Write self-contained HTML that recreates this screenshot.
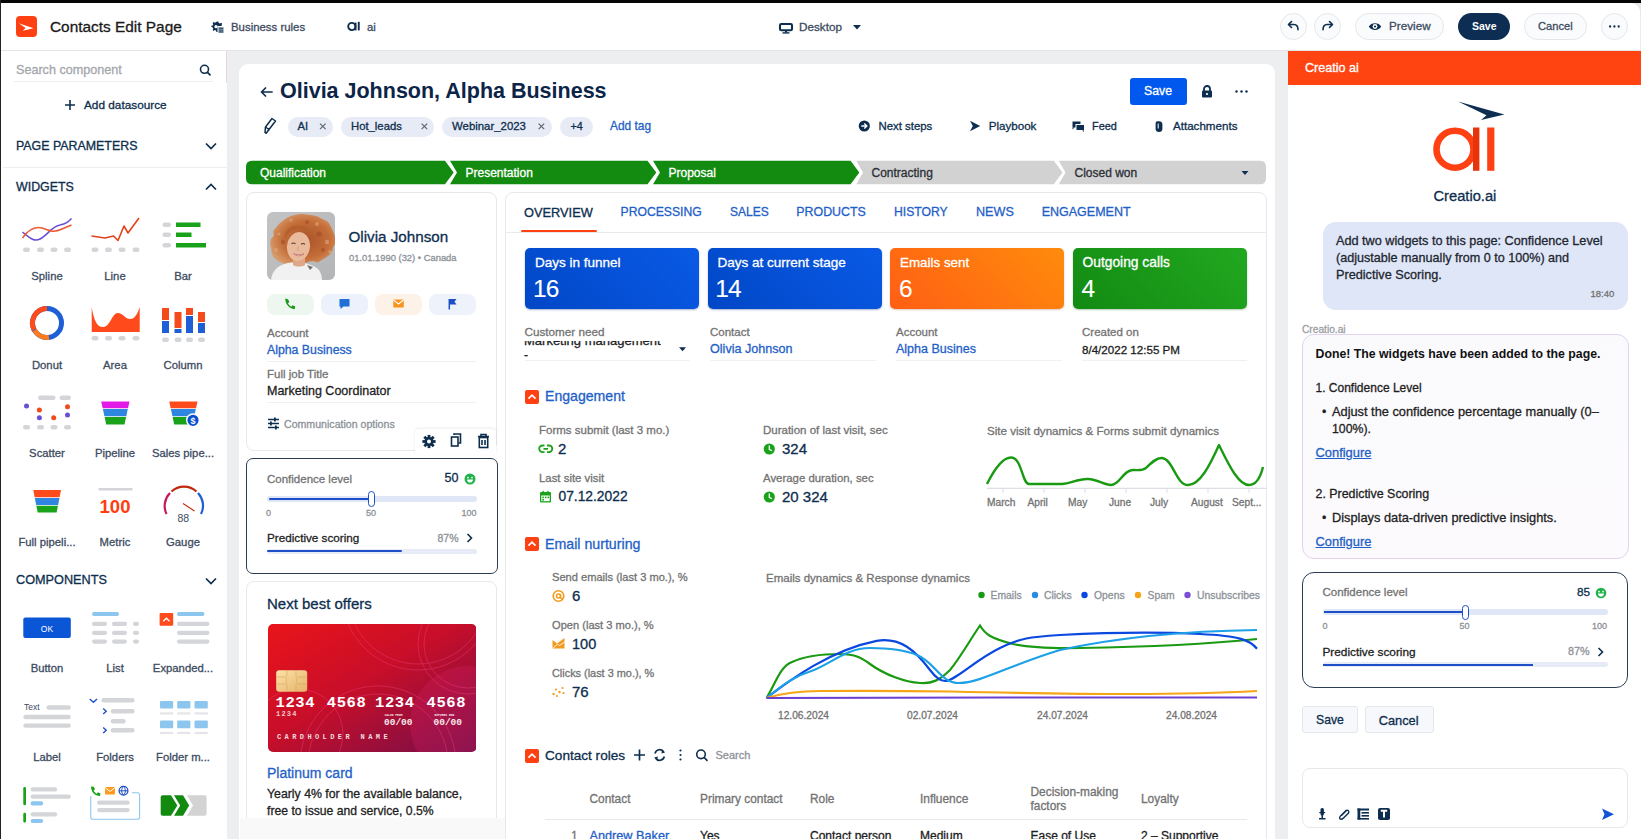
<!DOCTYPE html>
<html><head><meta charset="utf-8">
<style>
*{box-sizing:border-box;margin:0;padding:0}
html,body{width:1641px;height:839px;overflow:hidden;background:#fff}
body{position:relative;font-family:"Liberation Sans",sans-serif;color:#0d2e4e}
.t{-webkit-text-stroke:0.3px currentColor}
.a{position:absolute}
.t{position:absolute;white-space:nowrap}
svg{display:block}
</style></head>
<body>
<!-- frame -->
<div class="a" style="left:0;top:0;width:1641px;height:3px;background:#050505"></div>
<div class="a" style="left:0;top:0;width:1px;height:839px;background:#222"></div>

<!-- HEADER -->
<div class="a" style="left:1629px;top:3px;width:12px;height:12px;background:#e6e7e9"></div>
<div class="a" style="left:1600px;top:3px;width:40px;height:40px;background:#fff;border-radius:0 9px 0 0"></div>
<div class="a" style="left:1640px;top:14px;width:1px;height:37px;background:#ececec"></div>
<div id="header">
  <div class="a" style="left:16px;top:16px;width:21px;height:21px;background:#ff4013;border-radius:4px"></div>
  <svg class="a" style="left:16px;top:16px" width="21" height="21" viewBox="0 0 21 21"><path d="M2.8 7.2 L17.5 12.3 L6.8 14.8 L9.6 12.1 Z" fill="#fff"/></svg>
  <div class="t" style="left:50px;top:18px;font-size:15.4px;line-height:18px;color:#1a1a1a">Contacts Edit Page</div>
  <svg class="a" style="left:211px;top:21px" width="13" height="12" viewBox="0 0 13 12"><path d="M6 0.5 L7.3 0.5 L7.7 2 L9 2.6 L10.3 1.8 L11.2 2.7 L10.5 4 L10.9 5 H6.5 V11 L5.4 11 L5 9.6 L3.8 9.1 L2.5 9.9 L1.6 9 L2.3 7.7 L1.8 6.5 L0.4 6.1 V4.8 L1.8 4.4 L2.3 3.2 L1.6 1.9 L2.5 1 L3.8 1.8 L5 1.3 Z" fill="#0d2e4e"/><circle cx="5" cy="5.7" r="1.6" fill="#fff"/><rect x="7.5" y="6.5" width="5" height="1.3" fill="#0d2e4e"/><rect x="7.5" y="8.4" width="5" height="1.3" fill="#0d2e4e"/><rect x="7.5" y="10.3" width="5" height="1.3" fill="#0d2e4e"/></svg>
  <div class="t" style="left:231px;top:20px;font-size:11.4px;line-height:14px;color:#3d4b5f">Business rules</div>
  <svg class="a" style="left:347px;top:21px" width="14" height="11" viewBox="0 0 14 11"><circle cx="4.8" cy="5.5" r="3.6" fill="none" stroke="#0d2e4e" stroke-width="1.9"/><rect x="7.6" y="1.6" width="1.9" height="7.8" fill="#0d2e4e"/><rect x="10.8" y="0.8" width="1.9" height="8.6" fill="#0d2e4e"/></svg>
  <div class="t" style="left:367px;top:20px;font-size:11.4px;line-height:14px;color:#3d4b5f">ai</div>
  <svg class="a" style="left:778px;top:22px" width="16" height="12" viewBox="0 0 16 12"><rect x="2" y="2" width="12" height="6.3" rx="1.3" fill="none" stroke="#0d2e4e" stroke-width="2.1"/><rect x="7" y="9" width="2" height="1.5" fill="#0d2e4e"/><rect x="4.5" y="10.2" width="7" height="1.4" fill="#0d2e4e"/></svg>
  <div class="t" style="left:799px;top:20px;font-size:11.7px;line-height:14px;color:#3d4b5f">Desktop</div>
  <svg class="a" style="left:853px;top:25px" width="8" height="5" viewBox="0 0 8 5"><path d="M0 0 H8 L4 4.5 Z" fill="#0d2e4e"/></svg>
  <!-- right buttons -->
  <div class="a" style="left:1280px;top:13px;width:27px;height:27px;border:1px solid #e4e6e9;border-radius:50%;background:#fafbfc"></div>
  <svg class="a" style="left:1287px;top:20px" width="13" height="13" viewBox="0 0 13 13"><path d="M4.5 1.5 L1.5 4.5 L4.5 7.5" fill="none" stroke="#0d2e4e" stroke-width="1.6" stroke-linecap="round" stroke-linejoin="round"/><path d="M2 4.5 H7 C9.5 4.5 11 6.2 11 9.8" fill="none" stroke="#0d2e4e" stroke-width="1.6" stroke-linecap="round"/></svg>
  <div class="a" style="left:1314px;top:13px;width:27px;height:27px;border:1px solid #e4e6e9;border-radius:50%;background:#fafbfc"></div>
  <svg class="a" style="left:1321px;top:20px" width="13" height="13" viewBox="0 0 13 13"><path d="M8.5 1.5 L11.5 4.5 L8.5 7.5" fill="none" stroke="#0d2e4e" stroke-width="1.6" stroke-linecap="round" stroke-linejoin="round"/><path d="M11 4.5 H6 C3.5 4.5 2 6.2 2 9.8" fill="none" stroke="#0d2e4e" stroke-width="1.6" stroke-linecap="round"/></svg>
  <div class="a" style="left:1355px;top:13px;width:89px;height:27px;border:1px solid #e4e6e9;border-radius:14px;background:#fafbfc"></div>
  <svg class="a" style="left:1368px;top:21px" width="14" height="11" viewBox="0 0 14 11"><path d="M0.8 5.5 C3 1 11 1 13.2 5.5 C11 10 3 10 0.8 5.5 Z" fill="#0d2e4e"/><circle cx="7" cy="5.5" r="2.4" fill="#fff"/><circle cx="7" cy="5.5" r="1.1" fill="#0d2e4e"/></svg>
  <div class="t" style="left:1389px;top:19px;font-size:11.7px;line-height:14px;color:#3d4b5f">Preview</div>
  <div class="a" style="left:1458px;top:13px;width:52px;height:27px;border-radius:14px;background:#0d2e52"></div>
  <div class="t" style="left:1472px;top:19px;font-size:10.5px;line-height:14px;color:#fff;font-weight:bold;-webkit-text-stroke:0">Save</div>
  <div class="a" style="left:1524px;top:13px;width:63px;height:27px;border:1px solid #e4e6e9;border-radius:14px;background:#fafbfc"></div>
  <div class="t" style="left:1538px;top:19px;font-size:11.2px;line-height:14px;color:#3d4b5f">Cancel</div>
  <div class="a" style="left:1601px;top:13px;width:27px;height:27px;border:1px solid #e4e6e9;border-radius:50%;background:#fafbfc"></div>
  <svg class="a" style="left:1608px;top:25px" width="13" height="3" viewBox="0 0 13 3"><circle cx="2.1" cy="1.5" r="1.15" fill="#0d2e4e"/><circle cx="6.4" cy="1.5" r="1.15" fill="#0d2e4e"/><circle cx="10.7" cy="1.5" r="1.15" fill="#0d2e4e"/></svg>
</div>

<!-- gray bg -->
<div class="a" style="left:1px;top:50px;width:1640px;height:789px;background:#eceef0"></div>
<div class="a" style="left:1px;top:50px;width:1640px;height:1px;background:#e2e4e7"></div>

<!-- LEFT PANEL -->
<div class="a" style="left:1px;top:51px;width:226px;height:788px;background:#fff"></div>
<div class="a" style="left:226px;top:51px;width:1px;height:32px;background:#e8d8dc"></div>
<div class="t" style="left:16px;top:63px;font-size:12.6px;line-height:14px;color:#a3a7ad">Search component</div>
<svg class="a" style="left:199px;top:64px" width="13" height="12" viewBox="0 0 13 12"><circle cx="5.5" cy="5.3" r="4" fill="none" stroke="#0d2e4e" stroke-width="1.6"/><path d="M8.5 8.3 L11 10.8" stroke="#0d2e4e" stroke-width="1.7" stroke-linecap="round"/></svg>
<div class="a" style="left:14px;top:81px;width:199px;height:1px;background:#eceef1"></div>
<svg class="a" style="left:64px;top:99px" width="12" height="12" viewBox="0 0 12 12"><path d="M6 1 V11 M1 6 H11" stroke="#0d2e4e" stroke-width="1.6"/></svg>
<div class="t" style="left:84px;top:98px;font-size:11.8px;line-height:14px;color:#0d2e4e">Add datasource</div>
<div class="t" style="left:16px;top:139px;font-size:12.4px;line-height:15px;color:#0d2e4e">PAGE PARAMETERS</div>
<svg class="a" style="left:205px;top:142px" width="12" height="8" viewBox="0 0 12 8"><path d="M1 1.5 L6 6.5 L11 1.5" fill="none" stroke="#0d2e4e" stroke-width="1.7"/></svg>
<div class="a" style="left:3px;top:167px;width:224px;height:1px;background:#eceef1"></div>
<div class="t" style="left:16px;top:180px;font-size:12.4px;line-height:15px;color:#0d2e4e">WIDGETS</div>
<svg class="a" style="left:205px;top:183px" width="12" height="8" viewBox="0 0 12 8"><path d="M1 6.5 L6 1.5 L11 6.5" fill="none" stroke="#0d2e4e" stroke-width="1.7"/></svg>
<div class="t" style="left:16px;top:573px;font-size:12.7px;line-height:15px;color:#0d2e4e">COMPONENTS</div>
<svg class="a" style="left:205px;top:577px" width="12" height="8" viewBox="0 0 12 8"><path d="M1 1.5 L6 6.5 L11 1.5" fill="none" stroke="#0d2e4e" stroke-width="1.7"/></svg>

<!-- widget labels -->
<div class="a" style="left:0;top:0;font-size:11.3px;color:#3d4b5f">
<div class="t" style="left:7px;width:80px;text-align:center;top:269px;line-height:14px">Spline</div>
<div class="t" style="left:75px;width:80px;text-align:center;top:269px;line-height:14px">Line</div>
<div class="t" style="left:143px;width:80px;text-align:center;top:269px;line-height:14px">Bar</div>
<div class="t" style="left:7px;width:80px;text-align:center;top:358px;line-height:14px">Donut</div>
<div class="t" style="left:75px;width:80px;text-align:center;top:358px;line-height:14px">Area</div>
<div class="t" style="left:143px;width:80px;text-align:center;top:358px;line-height:14px">Column</div>
<div class="t" style="left:7px;width:80px;text-align:center;top:446px;line-height:14px">Scatter</div>
<div class="t" style="left:75px;width:80px;text-align:center;top:446px;line-height:14px">Pipeline</div>
<div class="t" style="left:143px;width:80px;text-align:center;top:446px;line-height:14px">Sales pipe...</div>
<div class="t" style="left:7px;width:80px;text-align:center;top:535px;line-height:14px">Full pipeli...</div>
<div class="t" style="left:75px;width:80px;text-align:center;top:535px;line-height:14px">Metric</div>
<div class="t" style="left:143px;width:80px;text-align:center;top:535px;line-height:14px">Gauge</div>
<div class="t" style="left:7px;width:80px;text-align:center;top:661px;line-height:14px">Button</div>
<div class="t" style="left:75px;width:80px;text-align:center;top:661px;line-height:14px">List</div>
<div class="t" style="left:143px;width:80px;text-align:center;top:661px;line-height:14px">Expanded...</div>
<div class="t" style="left:7px;width:80px;text-align:center;top:750px;line-height:14px">Label</div>
<div class="t" style="left:75px;width:80px;text-align:center;top:750px;line-height:14px">Folders</div>
<div class="t" style="left:143px;width:80px;text-align:center;top:750px;line-height:14px">Folder m...</div>
</div>

<!-- widget icons -->
<svg class="a" style="left:0;top:190px" width="227" height="649" viewBox="0 190 227 649">
 <g fill="#d3d5d8">
  <rect x="23" y="247.5" width="7" height="4.5" rx="2.2"/><rect x="37" y="247.5" width="7" height="4.5" rx="2.2"/><rect x="50.5" y="247.5" width="7" height="4.5" rx="2.2"/><rect x="64" y="247.5" width="7" height="4.5" rx="2.2"/>
  <rect x="91.5" y="247.5" width="7" height="4.5" rx="2.2"/><rect x="105" y="247.5" width="7" height="4.5" rx="2.2"/><rect x="118.5" y="247.5" width="7" height="4.5" rx="2.2"/><rect x="132.5" y="247.5" width="7" height="4.5" rx="2.2"/>
  <rect x="162.5" y="222.5" width="8.5" height="4.5" rx="2.2"/><rect x="162.5" y="232.5" width="8.5" height="4.5" rx="2.2"/><rect x="162.5" y="243" width="8.5" height="4.5" rx="2.2"/>
  <rect x="91.5" y="336" width="7" height="4.5" rx="2.2"/><rect x="105" y="336" width="7" height="4.5" rx="2.2"/><rect x="118.5" y="336" width="7" height="4.5" rx="2.2"/><rect x="132.5" y="336" width="7" height="4.5" rx="2.2"/>
  <rect x="162" y="337.5" width="7" height="4.5" rx="2.2"/><rect x="174.5" y="337.5" width="7" height="4.5" rx="2.2"/><rect x="186" y="337.5" width="7" height="4.5" rx="2.2"/><rect x="198" y="337.5" width="7" height="4.5" rx="2.2"/>
  <rect x="38" y="395.5" width="17.5" height="4.5" rx="2.2"/><rect x="59.5" y="395.5" width="11.5" height="4.5" rx="2.2"/>
  <rect x="23" y="425" width="7" height="4.5" rx="2.2"/><rect x="37" y="425" width="7" height="4.5" rx="2.2"/><rect x="50.5" y="425" width="7" height="4.5" rx="2.2"/><rect x="64" y="425" width="7" height="4.5" rx="2.2"/>
  <rect x="98.5" y="488" width="34" height="2.5"/>
 </g>
 <!-- spline -->
 <path d="M22.5 232 C30 238 34 242 40 239 C48 235 52 226 60 225 C66 224 68 222 71.5 218.5" fill="none" stroke="#6a4fd6" stroke-width="1.6"/>
 <path d="M22.5 238 C28 230 34 226 42 228 C50 231 54 233 62 229 L71.5 225" fill="none" stroke="#ee5a36" stroke-width="1.6"/>
 <!-- line -->
 <path d="M91.5 236 L105 238 L113.5 236 L118 240.5 L124 226 L128 233 L139 218" fill="none" stroke="#e2431c" stroke-width="1.6" stroke-linejoin="round"/>
 <!-- bar -->
 <g fill="#1aa31a"><rect x="176" y="222.5" width="24.5" height="4.5"/><rect x="176" y="232.5" width="15.5" height="4.5"/><rect x="176" y="243" width="30" height="4.5"/></g>
 <!-- donut -->
 <circle cx="47" cy="323" r="14.5" fill="none" stroke="#1f5fd6" stroke-width="5"/>
 <path d="M47 308.5 A14.5 14.5 0 0 0 34.2 329.8" fill="none" stroke="#ff4a1c" stroke-width="5"/>
 <path d="M34.6 330.3 A14.5 14.5 0 0 0 49 337.4" fill="none" stroke="#ff7a1c" stroke-width="5"/>
 <!-- area -->
 <path d="M91.7 307 C94 322 98 328 104 327 C110 326 112 313 118 313 C123 313 126 320 131 319 C136 318 138 312 139.7 307 V332 H91.7 Z" fill="#ff4a1c"/>
 <!-- column -->
 <g><rect x="162" y="308" width="7" height="12" fill="#f44a1c"/><rect x="162" y="321" width="7" height="12" fill="#1f5fd6"/>
 <rect x="174.5" y="312" width="7" height="16" fill="#f44a1c"/><rect x="174.5" y="329" width="7" height="4" fill="#1f5fd6"/>
 <rect x="186" y="308" width="7" height="7" fill="#f44a1c"/><rect x="186" y="316" width="7" height="17" fill="#1f5fd6"/>
 <rect x="198" y="312" width="7" height="10" fill="#f44a1c"/><rect x="198" y="323" width="7" height="10" fill="#1f5fd6"/></g>
 <!-- scatter -->
 <circle cx="26.5" cy="406" r="2.5" fill="#6a4fd6"/><circle cx="39.4" cy="410" r="2.5" fill="#f04a1c"/><circle cx="67.5" cy="406.7" r="2.5" fill="#f04a1c"/><circle cx="39.4" cy="417.8" r="2.5" fill="#6a4fd6"/><circle cx="53.7" cy="417.8" r="2.5" fill="#f04a1c"/><circle cx="67.5" cy="415" r="2.5" fill="#6a4fd6"/>
 <!-- pipeline -->
 <path d="M101.2 401.5 H129.5 L128 408.3 H102.7 Z" fill="#e21ae6"/><path d="M102.9 409 H127.8 L126.3 416.3 H104.4 Z" fill="#2f86e0"/><path d="M104.6 417 H126.1 L124.5 424.5 H106.2 Z" fill="#1aa31a"/>
 <path d="M169.2 401.5 H197.5 L196 408.3 H170.7 Z" fill="#ff4a1c"/><path d="M170.9 409 H195.8 L194.3 416.3 H172.4 Z" fill="#2f86e0"/><path d="M172.6 417 H194.1 L192.5 424.5 H174.2 Z" fill="#1aa31a"/>
 <circle cx="193" cy="420.3" r="6.3" fill="#0a4fd0" stroke="#fff" stroke-width="1.4"/>
 <text x="193" y="423.6" font-size="9" font-weight="bold" fill="#fff" text-anchor="middle" font-family="Liberation Sans">$</text>
 <path d="M33.3 490 H61 L59.6 497.2 H34.7 Z" fill="#ff4a1c"/><path d="M34.8 498 H59.5 L58.1 505 H36.2 Z" fill="#2f86e0"/><path d="M36.3 505.8 H58 L56.6 512.4 H37.7 Z" fill="#1aa31a"/>
 <!-- metric -->
 <text x="115" y="512.5" font-size="18.5" font-weight="bold" fill="#ff3d0f" text-anchor="middle" font-family="Liberation Sans">100</text>
 <!-- gauge -->
 <path d="M166.5 514 A18.5 18.5 0 0 1 170 493" fill="none" stroke="#c8175c" stroke-width="2.2"/>
 <path d="M171.5 491.5 A18.5 18.5 0 0 1 196.5 491.5" fill="none" stroke="#c0290d" stroke-width="2.2"/>
 <path d="M198 493 A18.5 18.5 0 0 1 201 514" fill="none" stroke="#1f5fd6" stroke-width="2.2"/>
 <path d="M183 503.5 L194.5 511" stroke="#c0290d" stroke-width="1.1"/>
 <text x="183.3" y="521.5" font-size="10.5" fill="#3d4b5f" text-anchor="middle" font-family="Liberation Sans">88</text>
 <!-- button -->
 <rect x="23.3" y="617.5" width="47.5" height="20.5" rx="2" fill="#0a56d6"/>
 <text x="47" y="631.5" font-size="8.5" fill="#fff" text-anchor="middle" font-family="Liberation Sans">OK</text>
 <!-- list -->
 <rect x="92" y="612" width="27" height="4" rx="2" fill="#8cc6ef"/>
 <g fill="#d3d5d8"><rect x="92" y="621.7" width="15" height="4.3" rx="2.1"/><rect x="112" y="621.7" width="15" height="4.3" rx="2.1"/><rect x="133" y="621.7" width="6" height="4.3" rx="2.1"/>
 <rect x="92" y="630.7" width="15" height="4.3" rx="2.1"/><rect x="112" y="630.7" width="15" height="4.3" rx="2.1"/><rect x="133" y="630.7" width="6" height="4.3" rx="2.1"/>
 <rect x="92" y="639.4" width="15" height="4.3" rx="2.1"/><rect x="112" y="639.4" width="15" height="4.3" rx="2.1"/><rect x="133" y="639.4" width="6" height="4.3" rx="2.1"/>
 <rect x="177" y="621.7" width="32.4" height="4.3" rx="2.1"/><rect x="177" y="630.7" width="32.4" height="4.3" rx="2.1"/><rect x="177" y="639.4" width="32.4" height="4.3" rx="2.1"/></g>
 <!-- expanded -->
 <rect x="159.6" y="613" width="13.6" height="12.8" rx="1" fill="#ff4a1c"/>
 <path d="M163.3 621.3 L166.4 618.2 L169.5 621.3" fill="none" stroke="#fff" stroke-width="1.3"/>
 <rect x="177" y="612" width="27.5" height="4" rx="2" fill="#8cc6ef"/>
 <!-- label -->
 <text x="24" y="710" font-size="8.5" fill="#3d4b5f" font-family="Liberation Sans">Text</text>
 <g fill="#d3d5d8"><rect x="46.5" y="705.3" width="24.3" height="4.4" rx="2.2"/><rect x="23.3" y="714.8" width="47.5" height="4.4" rx="2.2"/><rect x="23.3" y="723.4" width="47.5" height="4.4" rx="2.2"/>
 <!-- folders -->
 <rect x="101.4" y="698.1" width="33.2" height="4.4" rx="2.2"/><rect x="110.7" y="709.1" width="23.9" height="4.4" rx="2.2"/><rect x="110.7" y="719" width="15" height="4.4" rx="2.2"/><rect x="110.7" y="728" width="23.9" height="4.4" rx="2.2"/></g>
 <g fill="none" stroke="#1f4fc8" stroke-width="1.4"><path d="M89.8 699 L93.4 702.2 L97 699"/><path d="M103.2 708.6 L106.2 711.3 L103.2 714"/><path d="M103.2 727.5 L106.2 730.2 L103.2 732.9"/></g>
 <!-- folder m -->
 <g fill="#8cc6ef"><rect x="160" y="701" width="13.2" height="7.6" rx="1"/><rect x="177.2" y="701" width="13.2" height="7.6" rx="1"/><rect x="194.5" y="701" width="13.3" height="7.6" rx="1"/>
 <rect x="160" y="720.6" width="13.2" height="7.6" rx="1"/><rect x="177.2" y="720.6" width="13.2" height="7.6" rx="1"/><rect x="194.5" y="720.6" width="13.3" height="7.6" rx="1"/></g>
 <g fill="#e3e5e8"><rect x="160" y="712.3" width="13.2" height="2.2"/><rect x="177.2" y="712.3" width="13.2" height="2.2"/><rect x="194.5" y="712.3" width="13.3" height="2.2"/>
 <rect x="160" y="731.9" width="13.2" height="2.2"/><rect x="177.2" y="731.9" width="13.2" height="2.2"/><rect x="194.5" y="731.9" width="13.3" height="2.2"/></g>
 <!-- row3 icon1 -->
 <rect x="23.3" y="787" width="2.7" height="18.3" rx="1.3" fill="#1aa31a"/><rect x="23.3" y="812.7" width="2.7" height="9.9" rx="1.3" fill="#1aa31a"/>
 <g fill="#d3d5d8"><rect x="30.6" y="787.3" width="26.6" height="4.2" rx="2.1"/><rect x="30.6" y="794.6" width="40.2" height="4.2" rx="2.1"/><rect x="30.6" y="812.2" width="26.6" height="4.2" rx="2.1"/>
 <rect x="97" y="800.6" width="32.7" height="4.2" rx="2.1"/><rect x="97" y="808" width="32.7" height="4.2" rx="2.1"/></g>
 <g fill="#8cc6ef"><rect x="30.6" y="801.3" width="12.6" height="4.2" rx="2.1"/><rect x="30.6" y="818.9" width="12.6" height="4.2" rx="2.1"/></g>
 <!-- row3 icon2 -->
 <path d="M90.8 796 V817.3 A2 2 0 0 0 92.8 819.3 H137.6 A2 2 0 0 0 139.6 817.3 V794.7 A2 2 0 0 0 137.6 792.7 H132" fill="none" stroke="#8cc6ef" stroke-width="1.1"/>
 <path d="M91 786.5 C91 792 95 796 100 796 L100.5 793.5 L98 792.3 L96.8 793.8 C95.5 793 94.3 791.8 93.6 790.5 L95 789.3 L93.8 786.8 Z" fill="#1aa31a"/>
 <rect x="105" y="787" width="10" height="7.5" rx="0.8" fill="#ff9a1c"/><path d="M105 787.5 L110 791.5 L115 787.5" fill="none" stroke="#fff" stroke-width="1"/>
 <circle cx="123.5" cy="790.8" r="4.4" fill="none" stroke="#1f4fc8" stroke-width="1.3"/><path d="M119.1 790.8 H127.9 M123.5 786.4 C121 789 121 792.6 123.5 795.2 C126 792.6 126 789 123.5 786.4" fill="none" stroke="#1f4fc8" stroke-width="1"/>
 <!-- row3 icon3 -->
 <path d="M187 795.2 H204.6 Q206.6 795.2 206.6 797.2 V813.8 Q206.6 815.8 204.6 815.8 H187 L193 805.5 Z" fill="#d3d3d3"/>
 <path d="M162.7 795.2 H171 L177.4 805.5 L171 815.8 H162.7 Q160.7 815.8 160.7 813.8 V797.2 Q160.7 795.2 162.7 795.2 Z" fill="#128a10"/>
 <path d="M174 795.2 H183 L189.2 805.5 L183 815.8 H174 L180.2 805.5 Z" fill="#128a10"/>
</svg>

<!-- MAIN CARD -->
<div class="a" style="left:239px;top:64px;width:1036px;height:790px;background:#fff;border-radius:9px"></div>
<svg class="a" style="left:260px;top:87px" width="13" height="10" viewBox="0 0 13 10"><path d="M5.5 1 L1.5 5 L5.5 9 M1.8 5 H12" fill="none" stroke="#0d2e4e" stroke-width="1.7" stroke-linecap="round" stroke-linejoin="round"/></svg>
<div class="t" style="left:280px;top:79px;font-size:21.5px;line-height:25px;color:#0b2447;font-weight:bold;-webkit-text-stroke:0">Olivia Johnson, Alpha Business</div>
<div class="a" style="left:1130px;top:78px;width:56.5px;height:26.5px;background:#0058ef;border-radius:3px"></div>
<div class="t" style="left:1144px;top:84px;font-size:12.3px;line-height:15px;color:#fff">Save</div>
<svg class="a" style="left:1201px;top:85px" width="12" height="13" viewBox="0 0 12 13"><path d="M3 6 V4 A3 3 0 0 1 9 4 V6" fill="none" stroke="#0d2e4e" stroke-width="1.8"/><rect x="1" y="5.5" width="10" height="7" rx="1" fill="#0d2e4e"/><circle cx="6" cy="9" r="1.1" fill="#fff"/></svg>
<svg class="a" style="left:1235px;top:90px" width="13" height="3" viewBox="0 0 13 3"><circle cx="1.5" cy="1.5" r="1.2" fill="#0d2e4e"/><circle cx="6.5" cy="1.5" r="1.2" fill="#0d2e4e"/><circle cx="11.5" cy="1.5" r="1.2" fill="#0d2e4e"/></svg>
<!-- tags -->
<svg class="a" style="left:263px;top:117px" width="14" height="18" viewBox="0 0 14 18"><path d="M9 1.5 L12.5 4 L6 12.5 L2.5 10 Z" fill="none" stroke="#0d2e4e" stroke-width="1.5" stroke-linejoin="round"/><path d="M2.5 10 L2 15.5 L3.2 16.3 L6 12.5" fill="none" stroke="#0d2e4e" stroke-width="1.5" stroke-linejoin="round"/></svg>
<div class="a" style="left:287.5px;top:116.5px;width:45.5px;height:20px;background:#e7ebf5;border-radius:10px"></div>
<div class="a" style="left:340.5px;top:116.5px;width:93.5px;height:20px;background:#e7ebf5;border-radius:10px"></div>
<div class="a" style="left:442px;top:116.5px;width:110px;height:20px;background:#e7ebf5;border-radius:10px"></div>
<div class="a" style="left:559.5px;top:116.5px;width:33.5px;height:20px;background:#e7ebf5;border-radius:10px"></div>
<div class="t" style="left:297.5px;top:119px;font-size:11.2px;line-height:14px;color:#0d2e4e">AI</div>
<div class="t" style="left:351px;top:119px;font-size:11.3px;line-height:14px;color:#0d2e4e">Hot_leads</div>
<div class="t" style="left:452px;top:119px;font-size:11.4px;line-height:14px;color:#0d2e4e">Webinar_2023</div>
<div class="t" style="left:570.5px;top:119px;font-size:10.8px;line-height:14px;color:#0d2e4e">+4</div>
<svg class="a" style="left:0;top:0" width="600" height="140" viewBox="0 0 600 140"><g stroke="#5d6775" stroke-width="1.2"><path d="M320 123.6 L325.6 129.2 M325.6 123.6 L320 129.2"/><path d="M421.6 123.6 L427.2 129.2 M427.2 123.6 L421.6 129.2"/><path d="M538.6 123.6 L544.2 129.2 M544.2 123.6 L538.6 129.2"/></g></svg>
<div class="t" style="left:610px;top:119px;font-size:11.9px;line-height:14px;color:#1f5fc8">Add tag</div>
<!-- actions -->
<svg class="a" style="left:858px;top:120px" width="13" height="12" viewBox="0 0 13 12"><circle cx="6.3" cy="6" r="5.6" fill="#0d2e4e"/><path d="M3.3 6 H8.8 M6.3 3.4 L8.9 6 L6.3 8.6" fill="none" stroke="#fff" stroke-width="1.4"/></svg>
<div class="t" style="left:878.5px;top:119px;font-size:11.4px;line-height:14px;color:#0d2e4e">Next steps</div>
<svg class="a" style="left:969px;top:120px" width="12" height="12" viewBox="0 0 12 12"><path d="M1 0.8 L11.2 6 L1 11.2 L3.8 6 Z" fill="#0d2e4e"/></svg>
<div class="t" style="left:988.7px;top:119px;font-size:11.6px;line-height:14px;color:#0d2e4e">Playbook</div>
<svg class="a" style="left:1072px;top:121px" width="13" height="11" viewBox="0 0 13 11"><rect x="0.5" y="0.5" width="8" height="6" fill="#0d2e4e"/><path d="M0.5 6.5 V8.5 L2.5 6.5 Z" fill="#0d2e4e"/><rect x="4" y="3.5" width="8.5" height="6" fill="#0d2e4e" stroke="#fff" stroke-width="1"/><path d="M10 9.5 L12 11 V9.5Z" fill="#0d2e4e"/></svg>
<div class="t" style="left:1092px;top:119px;font-size:10.9px;line-height:14px;color:#0d2e4e">Feed</div>
<svg class="a" style="left:1154px;top:120px" width="10" height="13" viewBox="0 0 10 13"><path d="M5 1.2 C7.5 1.2 8.4 2.8 8.4 4.5 V8.8 C8.4 11 7 12 5 12 C3 12 1.6 11 1.6 8.8 V3.2 C1.6 2 2.4 1.2 3.4 1.2" fill="#0d2e4e"/><path d="M4.2 3.5 V8.5" stroke="#fff" stroke-width="1"/></svg>
<div class="t" style="left:1173px;top:119px;font-size:11.6px;line-height:14px;color:#0d2e4e">Attachments</div>
<!-- stage bar -->
<svg class="a" style="left:0;top:0" width="1280" height="200" viewBox="0 0 1280 200">
 <path d="M252 160.8 H445 L453.7 172.5 L445 184.2 H252 Q246 184.2 246 178.2 V166.8 Q246 160.8 252 160.8 Z" fill="#138a10"/>
 <path d="M450 160.8 H647.5 L656.3 172.5 L647.5 184.2 H450 L457 172.5 Z" fill="#138a10"/>
 <path d="M653 160.8 H850.6 L859.3 172.5 L850.6 184.2 H653 L660 172.5 Z" fill="#138a10"/>
 <path d="M856.3 160.8 H1053.8 L1062.5 172.5 L1053.8 184.2 H856.3 L863 172.5 Z" fill="#d2d2d2"/>
 <path d="M1058.8 160.8 H1260 Q1266 160.8 1266 166.8 V178.2 Q1266 184.2 1260 184.2 H1058.8 L1065.5 172.5 Z" fill="#d2d2d2"/>
 <path d="M1241.5 171 H1248.5 L1245 175 Z" fill="#0d2e4e"/>
</svg>
<div class="t" style="left:260px;top:166px;font-size:12px;line-height:15px;color:#fff">Qualification</div>
<div class="t" style="left:465.5px;top:166px;font-size:12px;line-height:15px;color:#fff">Presentation</div>
<div class="t" style="left:668.5px;top:166px;font-size:12px;line-height:15px;color:#fff">Proposal</div>
<div class="t" style="left:871.5px;top:166px;font-size:12px;line-height:15px;color:#2a2f36">Contracting</div>
<div class="t" style="left:1074.5px;top:166px;font-size:12px;line-height:15px;color:#2a2f36">Closed won</div>

<!-- LEFT COLUMN CARDS -->
<div class="a" style="left:246px;top:192px;width:250.5px;height:259px;border:1px solid #e6e8eb;border-radius:8px;background:#fff"></div>
<svg class="a" style="left:267px;top:212px" width="68" height="68" viewBox="0 0 68 68">
 <defs><clipPath id="pc"><rect width="68" height="68" rx="6"/></clipPath>
 <radialGradient id="hair" cx="0.55" cy="0.5" r="0.6"><stop offset="0" stop-color="#a9542a"/><stop offset="0.6" stop-color="#c46d38"/><stop offset="1" stop-color="#d9a070"/></radialGradient>
 <linearGradient id="bgp" x1="0" y1="0" x2="1" y2="1"><stop offset="0" stop-color="#c2c3c4"/><stop offset="1" stop-color="#b4b5b6"/></linearGradient></defs>
 <g clip-path="url(#pc)">
  <rect width="68" height="68" fill="url(#bgp)"/>
  <path d="M68 27.0 L68.5 31.1 L66.2 35.0 L65.3 39.1 L62.8 42.7 L58.8 45.5 L55.2 47.8 L50.9 50.5 L45.4 49.1 L40.7 50.0 L36.0 53.1 L27.4 52.8 L22.5 53.1 L18.7 52.3 L14.5 50.7 L10.3 48.7 L6.9 45.7 L4.6 41.5 L4.1 36.1 L3.1 31.2 L4.0 27.0 L6.8 23.4 L6.1 19.2 L8.6 15.9 L12.0 12.1 L15.6 9.0 L18.9 6.4 L22.8 4.5 L26.7 3.2 L31.2 2.2 L36.0 2.0 L41.2 2.7 L45.5 3.3 L50.8 4.5 L54.3 6.5 L59.5 8.8 L62.7 12.0 L64.3 15.6 L66.3 19.9 L67.7 23.4 Z" fill="url(#hair)"/>
  <g fill="#e0a978" opacity="0.6"><circle cx="9" cy="38" r="2"/><circle cx="60" cy="30" r="2.2"/><circle cx="24" cy="8" r="1.8"/><circle cx="50" cy="12" r="2"/><circle cx="12" cy="22" r="1.6"/><circle cx="63" cy="40" r="1.8"/></g>
  <g fill="#9a4722" opacity="0.5"><circle cx="16" cy="30" r="2.2"/><circle cx="52" cy="22" r="2.5"/><circle cx="40" cy="10" r="2"/><circle cx="56" cy="38" r="2"/></g>
  <path d="M4 68 C5 58 12 52 24 50.5 C34 49.5 46 52 52 58 C54 61 55 65 55 68 Z" fill="#f1f1f1"/>
  <path d="M40 53 L46 55 L43 58 Z" fill="#3a3a3a" opacity="0.7"/>
  <path d="M26 44 H38 V53 C35 55 29 55 26 53 Z" fill="#dca888"/>
  <ellipse cx="31.5" cy="34.5" rx="11.5" ry="14.5" fill="#e9bb9c" transform="rotate(8 31.5 34.5)"/>
  <path d="M18 28 C20 17 32 14 44 21 C42 15 34 11 24 15 C19 18 17 23 18 28 Z" fill="#b45f2e"/>
  <path d="M24.5 31.8 C25.5 31 27.5 31 28.5 31.8 M34 32.3 C35 31.5 37 31.5 38 32.3" fill="none" stroke="#5a3a2a" stroke-width="1.1"/>
  <path d="M31.5 34 L30.5 38 L32 38.5" fill="none" stroke="#c89478" stroke-width="0.7"/>
  <path d="M26.5 41.5 C29 44.5 34 44.5 37 41.8 C34 43 29 43 26.5 41.5 Z" fill="#fff" stroke="#c0706a" stroke-width="0.8"/>
 </g>
</svg>
<div class="t" style="left:348.5px;top:228px;font-size:15.2px;line-height:18px;color:#0d2e4e">Olivia Johnson</div>
<div class="t" style="left:349px;top:252px;font-size:9.4px;line-height:12px;color:#8d9299">01.01.1990 (32) • Canada</div>
<div class="a" style="left:267px;top:294px;width:47px;height:20.5px;background:#eef7ef;border-radius:8px"></div>
<div class="a" style="left:321px;top:294px;width:47px;height:20.5px;background:#ebf2fc;border-radius:8px"></div>
<div class="a" style="left:375px;top:294px;width:47px;height:20.5px;background:#fdf2e8;border-radius:8px"></div>
<div class="a" style="left:429px;top:294px;width:47px;height:20.5px;background:#edf2fb;border-radius:8px"></div>
<svg class="a" style="left:0;top:0" width="500" height="460" viewBox="0 0 500 460">
 <path d="M285.3 298.6 C285 304 289 308.6 294.6 309.3 L295.3 306.6 L292.6 305.3 L291.3 306.8 C289.8 306 288.6 304.8 287.9 303.3 L289.4 302 L288 299.3 Z" fill="#1a9a1a"/>
 <path d="M339.5 299 H349.5 V306.5 H343.5 L340.5 309 V306.5 H339.5 Z" fill="#1f6fd6"/>
 <rect x="393.3" y="299.6" width="10.5" height="8" rx="0.8" fill="#f7931e"/><path d="M393.5 300 L398.5 304 L403.5 300" fill="none" stroke="#fff" stroke-width="1.1"/>
 <path d="M449.3 299 V309.5" stroke="#1f4fc8" stroke-width="1.5"/><path d="M450 299 H456.5 L454.5 301.8 L456.5 304.6 H450 Z" fill="#1f4fc8"/>
 <g fill="none" stroke="#0d2e4e" stroke-width="1.3"><path d="M268 419.5 H279 M268 423.5 H279 M268 427.5 H279"/></g>
 <g fill="#0d2e4e"><rect x="274" y="417.5" width="1.8" height="4"/><rect x="270" y="421.5" width="1.8" height="4"/><rect x="275" y="425.5" width="1.8" height="4"/></g>
</svg>
<div class="t" style="left:267px;top:326px;font-size:11.5px;line-height:14px;color:#737373">Account</div>
<div class="t" style="left:267px;top:343.2px;font-size:12.3px;line-height:15px;color:#1f5fc8">Alpha Business</div>
<div class="a" style="left:267px;top:361px;width:209px;height:1px;background:#eef0f2"></div>
<div class="t" style="left:267px;top:367px;font-size:11.5px;line-height:14px;color:#737373">Full job Title</div>
<div class="t" style="left:267px;top:384px;font-size:12.5px;line-height:15px;color:#1e1e1e">Marketing Coordinator</div>
<div class="a" style="left:267px;top:402px;width:209px;height:1px;background:#eef0f2"></div>
<div class="t" style="left:284px;top:417.5px;font-size:10.6px;line-height:13px;color:#8d9299">Communication options</div>
<!-- toolbar -->
<div class="a" style="left:415px;top:428.5px;width:81px;height:26.5px;background:#fff;border-radius:4px 4px 0 0;box-shadow:0 -1px 3px rgba(0,0,0,0.08)"></div>
<svg class="a" style="left:415px;top:428px" width="81" height="27" viewBox="0 0 81 27">
 <g transform="translate(14 13.5)"><circle r="4.6" fill="#0d2e4e"/><g fill="#0d2e4e"><rect x="-1.4" y="-6.6" width="2.8" height="13.2"/><rect x="-1.4" y="-6.6" width="2.8" height="13.2" transform="rotate(45)"/><rect x="-1.4" y="-6.6" width="2.8" height="13.2" transform="rotate(90)"/><rect x="-1.4" y="-6.6" width="2.8" height="13.2" transform="rotate(135)"/></g><circle r="2" fill="#fff"/></g>
 <g fill="none" stroke="#0d2e4e" stroke-width="1.6"><rect x="36.5" y="9" width="6.5" height="9"/><path d="M39 7 V6 H45.5 V15 H43.5"/></g>
 <g fill="none" stroke="#0d2e4e" stroke-width="1.6"><path d="M63 8.5 H74"/><path d="M66 8.5 V6.5 H71 V8.5"/><rect x="64.3" y="9.5" width="8.4" height="10"/><path d="M67 12 V17 M70 12 V17"/></g>
</svg>

<!-- confidence card (left) -->
<div class="a" style="left:246px;top:458px;width:251.5px;height:116px;border:1.5px solid #2d3e54;border-radius:7px;background:#fff"></div>
<div class="t" style="left:267px;top:471.5px;font-size:11.5px;line-height:14px;color:#737373">Confidence level</div>
<div class="t" style="left:444.5px;top:471px;font-size:12.5px;line-height:15px;color:#0d2e4e">50</div>
<svg class="a" style="left:464px;top:472.5px" width="12" height="12" viewBox="0 0 12 12"><circle cx="6" cy="6" r="5.5" fill="#21b24b"/><circle cx="4" cy="4.6" r="0.9" fill="#fff"/><circle cx="8" cy="4.6" r="0.9" fill="#fff"/><path d="M3 6.5 H9 C9 8.5 7.6 9.6 6 9.6 C4.4 9.6 3 8.5 3 6.5 Z" fill="#fff"/></svg>
<div class="a" style="left:267px;top:496px;width:210px;height:6px;background:#dfe6f6;border-radius:3px"></div>
<div class="a" style="left:269px;top:498px;width:101px;height:2.2px;background:#1f4fc8;border-radius:1px"></div>
<div class="a" style="left:368.3px;top:491.2px;width:7px;height:15.8px;background:#fff;border:1.5px solid #1f4fc8;border-radius:3.5px"></div>
<div class="t" style="left:266px;top:507.5px;font-size:9px;line-height:11px;color:#8d9299">0</div>
<div class="t" style="left:366px;top:507.5px;font-size:9px;line-height:11px;color:#8d9299">50</div>
<div class="t" style="left:461.5px;top:507.5px;font-size:9px;line-height:11px;color:#8d9299">100</div>
<div class="t" style="left:267px;top:531px;font-size:11.7px;line-height:14px;color:#1e1e1e">Predictive scoring</div>
<div class="t" style="left:437.5px;top:531.5px;font-size:10.5px;line-height:13px;color:#8d9299">87%</div>
<svg class="a" style="left:466px;top:533px" width="7" height="10" viewBox="0 0 7 10"><path d="M1.5 1 L5.5 5 L1.5 9" fill="none" stroke="#0d2e4e" stroke-width="1.6"/></svg>
<div class="a" style="left:267px;top:548.8px;width:210px;height:5px;background:#e6ebf7;border-radius:2.5px"></div>
<div class="a" style="left:267px;top:550px;width:134.5px;height:2.4px;background:#1f4fc8;border-radius:1px"></div>

<!-- next best offers -->
<div class="a" style="left:246px;top:581px;width:250.5px;height:270px;border:1px solid #e6e8eb;border-radius:8px;background:#fff"></div>
<div class="t" style="left:267px;top:594.5px;font-size:15px;line-height:18px;color:#0d2e4e">Next best offers</div>
<svg class="a" style="left:267.5px;top:623.8px" width="208.5" height="128" viewBox="0 0 208.5 128">
 <defs>
  <linearGradient id="cc" x1="0" y1="0" x2="1" y2="1"><stop offset="0" stop-color="#ea151b"/><stop offset="0.45" stop-color="#c80f2a"/><stop offset="1" stop-color="#72104a"/></linearGradient>
  <linearGradient id="chip" x1="0" y1="0" x2="1" y2="1"><stop offset="0" stop-color="#fbe3a8"/><stop offset="1" stop-color="#e6b26a"/></linearGradient>
  <clipPath id="ccc"><rect width="208.5" height="128" rx="5"/></clipPath>
 </defs>
 <g clip-path="url(#ccc)">
  <rect width="208.5" height="128" fill="url(#cc)"/>
  <circle cx="200" cy="100" r="58" fill="#e0206a" opacity="0.25"/>
  <g fill="none" stroke="#f23a7a" stroke-width="0.8" opacity="0.55">
   <circle cx="200" cy="20" r="44"/><circle cx="200" cy="20" r="50"/>
   <circle cx="150" cy="-30" r="70"/><circle cx="150" cy="-30" r="76"/>
   <circle cx="110" cy="140" r="70"/><circle cx="110" cy="140" r="78"/>
   <circle cx="30" cy="110" r="45"/>
  </g>
  <rect x="8.2" y="46.2" width="31" height="21.5" rx="3" fill="url(#chip)"/>
  <g fill="none" stroke="#d9a55c" stroke-width="0.6"><path d="M8.2 53 H17 C19 53 19 60 17 60 H8.2 M39.2 53 H30 C28 53 28 60 30 60 H39.2 M19 46.2 V53 M28 46.2 V53 M19 60 V67.7 M28 60 V67.7"/></g>
  <g font-family="Liberation Mono" font-weight="bold" fill="#fff">
   <text x="7.5" y="82.8" font-size="15.5" letter-spacing="0.6">1234</text>
   <text x="58.8" y="82.8" font-size="15.5" letter-spacing="0.6">4568</text>
   <text x="107" y="82.8" font-size="15.5" letter-spacing="0.6">1234</text>
   <text x="158.5" y="82.8" font-size="15.5" letter-spacing="0.6">4568</text>
   <text x="8" y="91.5" font-size="7" letter-spacing="1.2" fill="#f4c8c8">1234</text>
   <text x="116" y="100.5" font-size="9.5" fill="#f8e8e8">00/00</text>
   <text x="165.5" y="100.5" font-size="9.5" fill="#f8e8e8">00/00</text>
   <text x="116.5" y="92" font-size="3" fill="#f8e8e8">VALID FROM</text>
   <text x="166.5" y="92" font-size="3" fill="#f8e8e8">EXPIRES END</text>
   <text x="9" y="115.3" font-size="7" letter-spacing="3.4" fill="#f4dcdc">CARDHOLDER NAME</text>
  </g>
 </g>
</svg>
<div class="t" style="left:267px;top:764.5px;font-size:14px;line-height:17px;color:#1f5fc8">Platinum card</div>
<div class="t" style="left:267px;top:786.5px;font-size:12.3px;line-height:15px;color:#1e1e1e">Yearly 4% for the available balance,</div>
<div class="t" style="left:267px;top:803.5px;font-size:12.2px;line-height:15px;color:#1e1e1e">free to issue and service, 0.5%</div>
<div class="a" style="left:240px;top:817.5px;width:265px;height:22px;background:#f9f9f9"></div>

<!-- TABS PANEL -->
<div class="a" style="left:505px;top:192px;width:762px;height:700px;border:1px solid #e6e8eb;border-radius:8px;background:#fff"></div>
<div class="t" style="left:524px;top:205.3px;font-size:12.8px;line-height:15px;color:#0d2e4e">OVERVIEW</div>
<div class="t" style="left:620.5px;top:205.3px;font-size:12.2px;line-height:15px;color:#1f5fc8">PROCESSING</div>
<div class="t" style="left:730px;top:205.3px;font-size:12px;line-height:15px;color:#1f5fc8">SALES</div>
<div class="t" style="left:796.3px;top:205.3px;font-size:12.4px;line-height:15px;color:#1f5fc8">PRODUCTS</div>
<div class="t" style="left:894px;top:205.3px;font-size:12.2px;line-height:15px;color:#1f5fc8">HISTORY</div>
<div class="t" style="left:976px;top:205.3px;font-size:12.6px;line-height:15px;color:#1f5fc8">NEWS</div>
<div class="t" style="left:1041.7px;top:205.3px;font-size:12.5px;line-height:15px;color:#1f5fc8">ENGAGEMENT</div>
<div class="a" style="left:506px;top:231.5px;width:760px;height:1px;background:#e8eaed"></div>
<div class="a" style="left:521px;top:230px;width:75.5px;height:2.3px;background:#ff4013;border-radius:1px"></div>
<!-- metric cards -->
<div class="a" style="left:525px;top:248px;width:174px;height:61px;border-radius:5px;background:linear-gradient(45deg,#0047c6,#0a5ae6);box-shadow:0 1px 2px rgba(0,40,120,0.35)"></div>
<div class="a" style="left:708px;top:248px;width:174px;height:61px;border-radius:5px;background:linear-gradient(45deg,#0047c6,#0a5ae6);box-shadow:0 1px 2px rgba(0,40,120,0.35)"></div>
<div class="a" style="left:890px;top:248px;width:174px;height:61px;border-radius:5px;background:linear-gradient(45deg,#ff5e14,#ff8c0c);box-shadow:0 1px 2px rgba(120,40,0,0.25)"></div>
<div class="a" style="left:1073px;top:248px;width:174px;height:61px;border-radius:5px;background:linear-gradient(45deg,#128a12,#22a820);box-shadow:0 1px 2px rgba(0,80,0,0.3)"></div>
<div class="t" style="left:535px;top:255px;font-size:13.5px;line-height:16px;color:#fff">Days in funnel</div>
<div class="t" style="left:717.5px;top:255px;font-size:13.5px;line-height:16px;color:#fff">Days at current stage</div>
<div class="t" style="left:900px;top:255px;font-size:13.4px;line-height:16px;color:#fff">Emails sent</div>
<div class="t" style="left:1082.5px;top:255px;font-size:13.8px;line-height:16px;color:#fff">Outgoing calls</div>
<div class="t" style="left:533px;top:275.5px;font-size:24.5px;line-height:26px;color:#fff;letter-spacing:-0.8px;-webkit-text-stroke:0.1px #fff">16</div>
<div class="t" style="left:715.3px;top:275.5px;font-size:24.5px;line-height:26px;color:#fff;letter-spacing:-0.8px;-webkit-text-stroke:0.1px #fff">14</div>
<div class="t" style="left:899px;top:275.5px;font-size:24.5px;line-height:26px;color:#fff;letter-spacing:-0.8px;-webkit-text-stroke:0.1px #fff">6</div>
<div class="t" style="left:1081.5px;top:275.5px;font-size:24.5px;line-height:26px;color:#fff;letter-spacing:-0.8px;-webkit-text-stroke:0.1px #fff">4</div>
<!-- fields -->
<div class="t" style="left:524.5px;top:324.5px;font-size:11.7px;line-height:14px;color:#737373">Customer need</div>
<div class="a" style="left:524px;top:341px;width:150px;height:19px;overflow:hidden">
  <div class="t" style="left:0;top:-8.5px;font-size:13px;line-height:15px;color:#1e1e1e">Marketing management</div>
  <div class="t" style="left:0;top:6.5px;font-size:12.3px;line-height:15px;color:#1e1e1e">-</div>
</div>
<svg class="a" style="left:678.5px;top:347px" width="7" height="5" viewBox="0 0 7 5"><path d="M0 0.3 H7 L3.5 4.3 Z" fill="#0d2e4e"/></svg>
<div class="a" style="left:525px;top:360px;width:165px;height:1px;background:#eef0f2"></div>
<div class="t" style="left:710px;top:324.5px;font-size:11.5px;line-height:14px;color:#737373">Contact</div>
<div class="t" style="left:710px;top:341.5px;font-size:12.6px;line-height:15px;color:#1f5fc8">Olivia Johnson</div>
<div class="a" style="left:710px;top:360px;width:166px;height:1px;background:#eef0f2"></div>
<div class="t" style="left:896px;top:324.5px;font-size:11.5px;line-height:14px;color:#737373">Account</div>
<div class="t" style="left:896px;top:341.5px;font-size:12.5px;line-height:15px;color:#1f5fc8">Alpha Busines</div>
<div class="a" style="left:896px;top:360px;width:166px;height:1px;background:#eef0f2"></div>
<div class="t" style="left:1082px;top:324.5px;font-size:11.5px;line-height:14px;color:#737373">Created on</div>
<div class="t" style="left:1082px;top:341.5px;font-size:11.6px;line-height:15px;color:#1e1e1e">8/4/2022 12:55 PM</div>
<div class="a" style="left:1082px;top:360px;width:165px;height:1px;background:#eef0f2"></div>

<!-- section icons -->
<svg class="a" style="left:524.5px;top:389.5px" width="14" height="14" viewBox="0 0 14 14"><rect width="14" height="14" rx="2" fill="#ff4013"/><path d="M3.5 8.6 L7 5.1 L10.5 8.6" fill="none" stroke="#fff" stroke-width="1.7"/></svg>
<svg class="a" style="left:524.5px;top:536.5px" width="14" height="14" viewBox="0 0 14 14"><rect width="14" height="14" rx="2" fill="#ff4013"/><path d="M3.5 8.6 L7 5.1 L10.5 8.6" fill="none" stroke="#fff" stroke-width="1.7"/></svg>
<svg class="a" style="left:524.5px;top:748.5px" width="14" height="14" viewBox="0 0 14 14"><rect width="14" height="14" rx="2" fill="#ff4013"/><path d="M3.5 8.6 L7 5.1 L10.5 8.6" fill="none" stroke="#fff" stroke-width="1.7"/></svg>

<!-- engagement -->
<div class="t" style="left:545px;top:388px;font-size:14.1px;line-height:17px;color:#1f5fc8">Engagement</div>
<div class="t" style="left:539px;top:423px;font-size:11.5px;line-height:14px;color:#737373">Forms submit (last 3 mo.)</div>
<div class="t" style="left:558px;top:440px;font-size:15px;line-height:18px;color:#0d2e4e">2</div>
<div class="t" style="left:539px;top:470.5px;font-size:11.4px;line-height:14px;color:#737373">Last site visit</div>
<div class="t" style="left:558.5px;top:488px;font-size:13.8px;line-height:18px;color:#0d2e4e">07.12.2022</div>
<div class="t" style="left:763px;top:423px;font-size:11.5px;line-height:14px;color:#737373">Duration of last visit, sec</div>
<div class="t" style="left:782px;top:440px;font-size:15px;line-height:18px;color:#0d2e4e">324</div>
<div class="t" style="left:763px;top:470.5px;font-size:11.4px;line-height:14px;color:#737373">Average duration, sec</div>
<div class="t" style="left:782px;top:488px;font-size:15px;line-height:18px;color:#0d2e4e">20 324</div>
<svg class="a" style="left:0;top:0" width="1280" height="839" viewBox="0 0 1280 839">
 <!-- link icon -->
 <g fill="none" stroke="#1aa31a" stroke-width="1.8"><path d="M544.5 445.5 H542.5 A3.3 3.3 0 0 0 542.5 452.1 H544.5 M547 445.5 H549 A3.3 3.3 0 0 1 549 452.1 H547 M543.5 448.8 H548"/></g>
 <!-- calendar -->
 <rect x="540" y="492" width="11" height="10.5" rx="1" fill="#1aa31a"/><rect x="541.3" y="495.5" width="8.4" height="5.7" fill="#fff"/><g fill="#1aa31a"><rect x="542.3" y="496.6" width="1.6" height="1.6"/><rect x="544.9" y="496.6" width="1.6" height="1.6"/><rect x="547.5" y="496.6" width="1.6" height="1.6"/><rect x="542.3" y="499" width="1.6" height="1.6"/></g><rect x="542.5" y="490.8" width="1.3" height="2.5" fill="#1aa31a"/><rect x="547.3" y="490.8" width="1.3" height="2.5" fill="#1aa31a"/>
 <!-- clocks -->
 <circle cx="769.3" cy="449" r="5.6" fill="#1aa31a"/><path d="M769.3 445.6 V449.3 L771.8 450.8" fill="none" stroke="#fff" stroke-width="1.3"/>
 <circle cx="769.3" cy="497" r="5.6" fill="#1aa31a"/><path d="M769.3 493.6 V497.3 L771.8 498.8" fill="none" stroke="#fff" stroke-width="1.3"/>
 <!-- site visit chart -->
 <path d="M987 488.4 H1266.5" stroke="#dcdfe3" stroke-width="1.2"/>
 <g stroke="#dcdfe3" stroke-width="1"><path d="M1003 488.4 V493 M1044 488.4 V493 M1085 488.4 V493 M1126 488.4 V493 M1167 488.4 V493 M1208 488.4 V493 M1249 488.4 V493"/></g>
 <path d="M987 484 C995 468 1003 457.5 1011 457.5 C1022 457.5 1022 484 1029 484 L1062 484 C1070 484 1078 478.5 1088 479 C1098 479.5 1104 485 1111 485 C1120 485 1123 470 1133 470 C1139 470 1142 471 1146 468 C1152 462 1157 457.5 1162 458 C1173 459 1176 485 1188 485 C1200 485 1210 465 1219 445 C1228 463 1238 485 1249 485 C1257 485 1261 475 1263 467" fill="none" stroke="#1a9a12" stroke-width="2.4" stroke-linejoin="round"/>
</svg>
<div class="t" style="left:987px;top:423.5px;font-size:11.6px;line-height:14px;color:#737373">Site visit dynamics &amp; Forms submit dynamics</div>
<div class="a" style="left:0;top:0;font-size:10.2px;color:#737373">
 <div class="t" style="left:987px;top:496px;line-height:13px">March</div>
 <div class="t" style="left:1027.5px;top:496px;line-height:13px">April</div>
 <div class="t" style="left:1068px;top:496px;line-height:13px">May</div>
 <div class="t" style="left:1109px;top:496px;line-height:13px">June</div>
 <div class="t" style="left:1150px;top:496px;line-height:13px">July</div>
 <div class="t" style="left:1191px;top:496px;line-height:13px">August</div>
 <div class="t" style="left:1232px;top:496px;line-height:13px">Sept...</div>
</div>

<!-- email nurturing -->
<div class="t" style="left:545px;top:535.5px;font-size:14.2px;line-height:17px;color:#1f5fc8">Email nurturing</div>
<div class="t" style="left:552px;top:570px;font-size:11.1px;line-height:14px;color:#737373">Send emails (last 3 mo.), %</div>
<div class="t" style="left:572px;top:587px;font-size:15px;line-height:18px;color:#0d2e4e">6</div>
<div class="t" style="left:552px;top:618px;font-size:11.1px;line-height:14px;color:#737373">Open (last 3 mo.), %</div>
<div class="t" style="left:572px;top:635px;font-size:14.5px;line-height:18px;color:#0d2e4e">100</div>
<div class="t" style="left:552px;top:665.5px;font-size:10.9px;line-height:14px;color:#737373">Clicks (last 3 mo.), %</div>
<div class="t" style="left:572px;top:683px;font-size:15px;line-height:18px;color:#0d2e4e">76</div>
<div class="t" style="left:766px;top:570.5px;font-size:11.5px;line-height:14px;color:#737373">Emails dynamics &amp; Response dynamics</div>
<svg class="a" style="left:0;top:0" width="1280" height="839" viewBox="0 0 1280 839">
 <!-- @ icon -->
 <circle cx="558.5" cy="596" r="5.3" fill="none" stroke="#f29a1e" stroke-width="1.6"/><circle cx="558.5" cy="596" r="2" fill="none" stroke="#f29a1e" stroke-width="1.5"/><path d="M560.5 594 V597.2 C560.5 598.6 562 599 563 598" fill="none" stroke="#f29a1e" stroke-width="1.4"/>
 <!-- open mail icon -->
 <path d="M552.5 640 L557 643.5 L564.5 638 V648.5 H552.5 Z" fill="#f29a1e"/><path d="M552.5 648.5 L557.5 644.2 L559.5 645.5 L564.5 642" fill="none" stroke="#fff" stroke-width="0.9"/>
 <!-- dots icon -->
 <g fill="#f29a1e"><circle cx="553.5" cy="694" r="1.2"/><circle cx="556" cy="689.5" r="1.1"/><circle cx="559.5" cy="692" r="1.2"/><circle cx="562.5" cy="688" r="1"/><circle cx="563.5" cy="693" r="1.1"/><circle cx="557" cy="696" r="1"/></g>
 <!-- legend -->
 <circle cx="981.5" cy="595" r="3.2" fill="#1a9a12"/><circle cx="1035" cy="595" r="3.2" fill="#2a8ae0"/><circle cx="1084.5" cy="595" r="3.2" fill="#0a48e0"/><circle cx="1138" cy="595" r="3.2" fill="#f7a416"/><circle cx="1187.5" cy="595" r="3.2" fill="#7a4fd6"/>
 <!-- lines -->
 <path d="M766.5 698 C775 685 780 666 792 662 C805 656 825 654 840 654 C855 654 862 658 870 664 C885 675 905 682 920 683 C932 684 940 680 950 670 C960 658 970 640 980 625.5 C985 634 990 638 1013 644 C1030 648 1050 648.5 1080 648 C1150 647 1200 645 1257 639" fill="none" stroke="#1a9a12" stroke-width="2.2"/>
 <path d="M766.5 698 C790 680 830 650 876.7 640.8 C900 637 915 650 930 670 C936 678 940 681 945 681 C955 681 975 660 1000 648 C1020 638 1030 637 1060 635 C1100 633 1160 632 1200 634 C1240 636 1250 640 1257 648.7" fill="none" stroke="#0a48e0" stroke-width="2.2"/>
 <path d="M766.5 698 C785 683 795 676 810 671.5 C830 665 845 648 870 648 C890 648 905 650 917 655 C935 662 940 683 959 683 C980 683 1010 665 1060 650 C1120 637 1180 631 1257 630" fill="none" stroke="#1ca0e6" stroke-width="2.2"/>
 <path d="M766.5 698 C780 694 800 691 820 691 C870 690.5 920 691 950 691.5 C1020 693 1080 694 1130 694 C1200 694 1230 692.5 1257 691" fill="none" stroke="#f7a416" stroke-width="2.2"/>
 <path d="M766.5 698 C790 697.5 850 697.5 1000 697.5 C1100 697.5 1200 697.5 1257 697.5" fill="none" stroke="#6b3fd0" stroke-width="2.2"/>
</svg>
<div class="a" style="left:0;top:0;font-size:10.4px;color:#8d9299">
 <div class="t" style="left:990.5px;top:588.5px;line-height:13px">Emails</div>
 <div class="t" style="left:1044px;top:588.5px;line-height:13px">Clicks</div>
 <div class="t" style="left:1094px;top:588.5px;line-height:13px">Opens</div>
 <div class="t" style="left:1147.5px;top:588.5px;line-height:13px">Spam</div>
 <div class="t" style="left:1197px;top:588.5px;line-height:13px">Unsubscribes</div>
</div>
<div class="a" style="left:0;top:0;font-size:10.2px;color:#737373">
 <div class="t" style="left:778px;top:708.5px;line-height:13px">12.06.2024</div>
 <div class="t" style="left:907px;top:708.5px;line-height:13px">02.07.2024</div>
 <div class="t" style="left:1037px;top:708.5px;line-height:13px">24.07.2024</div>
 <div class="t" style="left:1166px;top:708.5px;line-height:13px">24.08.2024</div>
</div>

<!-- contact roles -->
<div class="t" style="left:545px;top:747px;font-size:13.6px;line-height:17px;color:#0d2e4e">Contact roles</div>
<svg class="a" style="left:0;top:0" width="1280" height="839" viewBox="0 0 1280 839">
 <path d="M639.5 749.5 V760.5 M634 755 H645" stroke="#0d2e4e" stroke-width="1.7"/>
 <g fill="none" stroke="#0d2e4e" stroke-width="1.6"><path d="M655 753.5 A4.8 4.8 0 0 1 663.8 752"/><path d="M664.3 756.5 A4.8 4.8 0 0 1 655.5 758"/></g>
 <path d="M662 749.5 L665 752.5 L661.5 753.5 Z M657.3 760.5 L654.3 757.5 L657.8 756.5 Z" fill="#0d2e4e"/>
 <g fill="#0d2e4e"><circle cx="680.5" cy="750.5" r="1.1"/><circle cx="680.5" cy="755" r="1.1"/><circle cx="680.5" cy="759.5" r="1.1"/></g>
 <circle cx="701" cy="754.3" r="4.3" fill="none" stroke="#0d2e4e" stroke-width="1.6"/><path d="M704.2 757.5 L707 760.3" stroke="#0d2e4e" stroke-width="1.7" stroke-linecap="round"/>
</svg>
<div class="t" style="left:715.5px;top:748px;font-size:11px;line-height:14px;color:#8d9299">Search</div>
<div class="a" style="left:0;top:0;font-size:11.9px;color:#737373">
 <div class="t" style="left:589.5px;top:792px;line-height:14px">Contact</div>
 <div class="t" style="left:700px;top:792px;line-height:14px">Primary contact</div>
 <div class="t" style="left:810px;top:792px;line-height:14px">Role</div>
 <div class="t" style="left:920px;top:792px;line-height:14px">Influence</div>
 <div class="t" style="left:1030.5px;top:785px;line-height:14px">Decision-making</div>
 <div class="t" style="left:1030.5px;top:798.5px;line-height:14px">factors</div>
 <div class="t" style="left:1141px;top:792px;line-height:14px">Loyalty</div>
</div>
<div class="a" style="left:545px;top:818.5px;width:702px;height:1px;background:#e6e8eb"></div>
<div class="a" style="left:0;top:0;font-size:12px;color:#1e1e1e">
 <div class="t" style="left:571px;top:829px;line-height:15px;color:#737373">1</div>
 <div class="t" style="left:589.5px;top:829px;line-height:15px;color:#1f5fc8;font-size:12.7px">Andrew Baker</div>
 <div class="t" style="left:700px;top:829px;line-height:15px">Yes</div>
 <div class="t" style="left:810px;top:829px;line-height:15px">Contact person</div>
 <div class="t" style="left:920px;top:829px;line-height:15px">Medium</div>
 <div class="t" style="left:1030.5px;top:829px;line-height:15px">Ease of Use</div>
 <div class="t" style="left:1141px;top:829px;line-height:15px">2 – Supportive</div>
</div>

<!-- AI PANEL -->
<div class="a" style="left:1288px;top:51px;width:353px;height:788px;background:#fff"></div>
<div class="a" style="left:1288px;top:51px;width:353px;height:34px;background:#ff4412"></div>
<div class="t" style="left:1305px;top:60px;font-size:12.6px;line-height:16px;color:#fff">Creatio ai</div>
<svg class="a" style="left:1420px;top:95px" width="100" height="85" viewBox="1420 95 100 85">
 <path d="M1458 101.4 L1504.4 114.6 L1481 120 L1486.5 115.3 Z" fill="#0d2e52"/>
 <circle cx="1455" cy="149.2" r="18.5" fill="none" stroke="#ff4013" stroke-width="6.6"/>
 <rect x="1473" y="127.5" width="6.4" height="43.3" fill="#e8340c"/>
 <rect x="1487.2" y="127.5" width="7.2" height="43.3" fill="#ff4013"/>
</svg>
<div class="t" style="left:1433.5px;top:187px;font-size:14.7px;line-height:18px;color:#0d2e4e">Creatio.ai</div>
<!-- user bubble -->
<div class="a" style="left:1323px;top:222px;width:304.5px;height:88px;background:#dfe6f7;border-radius:13px"></div>
<div class="a" style="left:1336px;top:0;font-size:12.7px;color:#1e2630">
 <div class="t" style="left:0;top:233px;line-height:16px">Add two widgets to this page: Confidence Level</div>
 <div class="t" style="left:0;top:250px;line-height:16px;font-size:12.6px">(adjustable manually from 0 to 100%) and</div>
 <div class="t" style="left:0;top:267px;line-height:16px">Predictive Scoring.</div>
</div>
<div class="t" style="left:1590.5px;top:287.5px;font-size:9.5px;line-height:12px;color:#737373">18:40</div>
<div class="t" style="left:1302px;top:323.5px;font-size:10.2px;line-height:12px;color:#9a9ea4">Creatio.ai</div>
<!-- response card -->
<div class="a" style="left:1302px;top:334px;width:327px;height:225px;border:1.6px solid #e2d2ee;border-radius:12px;background:linear-gradient(180deg,#fafafd,#fcfafc)"></div>
<div class="t" style="left:1315.5px;top:345.5px;font-size:12.3px;line-height:16px;color:#111;font-weight:bold;-webkit-text-stroke:0">Done! The widgets have been added to the page.</div>
<div class="a" style="left:0;top:0;font-size:12.3px;color:#1e1e1e">
 <div class="t" style="left:1315.5px;top:379.5px;line-height:16px;font-size:12px">1. Confidence Level</div>
 <div class="t" style="left:1322px;top:403.5px;line-height:16px">•</div>
 <div class="t" style="left:1332px;top:403.5px;line-height:16px;font-size:12.8px">Adjust the confidence percentage manually (0–</div>
 <div class="t" style="left:1332px;top:421px;line-height:16px">100%).</div>
 <div class="t" style="left:1315.5px;top:444.5px;line-height:16px;color:#1f5fc8;text-decoration:underline;font-size:12.9px">Configure</div>
 <div class="t" style="left:1315.5px;top:485.5px;line-height:16px;font-size:12.4px">2. Predictive Scoring</div>
 <div class="t" style="left:1322px;top:509.5px;line-height:16px">•</div>
 <div class="t" style="left:1332px;top:509.5px;line-height:16px;font-size:12.8px">Displays data-driven predictive insights.</div>
 <div class="t" style="left:1315.5px;top:533.5px;line-height:16px;color:#1f5fc8;text-decoration:underline;font-size:12.9px">Configure</div>
</div>
<!-- confidence card (ai) -->
<div class="a" style="left:1302px;top:571.5px;width:326px;height:116px;border:1.5px solid #2d3e54;border-radius:12px;background:#fff"></div>
<div class="t" style="left:1322.5px;top:585px;font-size:11.5px;line-height:14px;color:#737373">Confidence level</div>
<div class="t" style="left:1577px;top:585px;font-size:11.8px;line-height:14px;color:#0d2e4e">85</div>
<svg class="a" style="left:1595px;top:586.5px" width="12" height="12" viewBox="0 0 12 12"><circle cx="6" cy="6" r="5.3" fill="#21b24b"/><circle cx="4" cy="4.6" r="0.9" fill="#fff"/><circle cx="8" cy="4.6" r="0.9" fill="#fff"/><path d="M3 6.5 H9 C9 8.5 7.6 9.6 6 9.6 C4.4 9.6 3 8.5 3 6.5 Z" fill="#fff"/></svg>
<div class="a" style="left:1322.5px;top:609.2px;width:285px;height:6.3px;background:#dfe6f6;border-radius:3px"></div>
<div class="a" style="left:1324px;top:611.3px;width:140px;height:2.2px;background:#1f4fc8"></div>
<div class="a" style="left:1461.8px;top:604.9px;width:6.8px;height:15.6px;background:#fff;border:1.5px solid #1f4fc8;border-radius:3.4px"></div>
<div class="t" style="left:1322.5px;top:620.5px;font-size:9px;line-height:11px;color:#8d9299">0</div>
<div class="t" style="left:1459.5px;top:620.5px;font-size:9px;line-height:11px;color:#8d9299">50</div>
<div class="t" style="left:1592px;top:620.5px;font-size:9px;line-height:11px;color:#8d9299">100</div>
<div class="t" style="left:1322.5px;top:644.5px;font-size:11.8px;line-height:14px;color:#1e1e1e">Predictive scoring</div>
<div class="t" style="left:1568px;top:645px;font-size:10.8px;line-height:13px;color:#8d9299">87%</div>
<svg class="a" style="left:1597px;top:646.5px" width="7" height="10" viewBox="0 0 7 10"><path d="M1.5 1 L5.5 5 L1.5 9" fill="none" stroke="#0d2e4e" stroke-width="1.6"/></svg>
<div class="a" style="left:1322.5px;top:662.4px;width:285px;height:4.8px;background:#e6ebf7;border-radius:2.4px"></div>
<div class="a" style="left:1322.5px;top:663.6px;width:210px;height:2.4px;background:#1f4fc8"></div>
<!-- buttons -->
<div class="a" style="left:1302px;top:706.3px;width:56px;height:27.2px;background:#f6f8fb;border:1px solid #e3e6ea;border-radius:3px"></div>
<div class="t" style="left:1316px;top:712.5px;font-size:12.2px;line-height:15px;color:#0d2e4e">Save</div>
<div class="a" style="left:1365.4px;top:706.3px;width:68.6px;height:27.2px;background:#f6f8fb;border:1px solid #e3e6ea;border-radius:3px"></div>
<div class="t" style="left:1378.7px;top:712.5px;font-size:12.8px;line-height:15px;color:#0d2e4e">Cancel</div>
<!-- input -->
<div class="a" style="left:1302px;top:767.8px;width:326px;height:59.8px;background:#fff;border:1px solid #e6e8eb;border-radius:8px"></div>
<svg class="a" style="left:1310px;top:805px" width="310" height="18" viewBox="1310 805 310 18">
 <g fill="#0d2e4e">
  <rect x="1320.5" y="808" width="3.4" height="7.5" rx="1.5"/><rect x="1321.5" y="815" width="1.5" height="3"/><rect x="1319" y="818" width="6.5" height="1.5"/><rect x="1319.3" y="812" width="5.8" height="1.2"/>
  <path d="M1346.5 810 L1340.5 816 C1339 817.5 1339.5 819.3 1341 819.3 C1342 819.3 1342.5 819 1343.5 818 L1348.5 813 C1349.5 811.5 1348 809.5 1346.5 810.5 L1341.5 815.5" fill="none" stroke="#0d2e4e" stroke-width="1.4"/>
  <rect x="1357.5" y="808.5" width="11.5" height="2" /><rect x="1357.5" y="808.5" width="2.8" height="11"/><rect x="1361.5" y="812" width="7.5" height="1.6"/><rect x="1361.5" y="815" width="7.5" height="1.6"/><rect x="1357.5" y="818" width="11.5" height="1.6"/>
  <rect x="1378" y="808" width="12" height="12" rx="2"/>
 </g>
 <path d="M1380.8 810.8 H1387.2 M1384 810.8 V817.5" stroke="#fff" stroke-width="2"/>
 <path d="M1602 808.5 L1614 814.3 L1602 820 L1604.5 814.3 Z" fill="#1352d6"/>
</svg>
</body></html>
